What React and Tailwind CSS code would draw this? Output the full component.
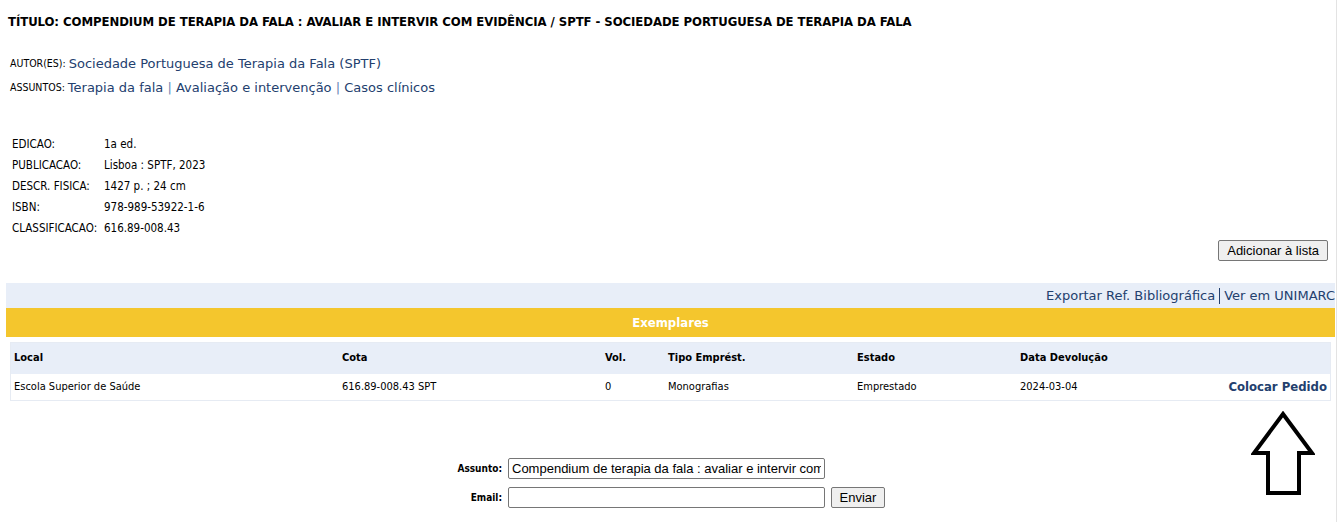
import React from 'react';

const font = "font-['DejaVu_Sans_Condensed','DejaVu_Sans',sans-serif]";
const wide = "font-['DejaVu_Sans',Verdana,sans-serif]";

const Detail = ({ label, value }) => (
    <div className="flex h-[21px] items-center text-[11.5px] text-black">
        <span className="w-[92px]">{label}</span>
        <span>{value}</span>
    </div>
);

const UpArrow = () => (
    <svg width="64" height="86" viewBox="0 0 64 86" className="block">
        <path
            d="M32 3 L61 42 L48 42 L48 82 L17 82 L17 42 L3 42 Z"
            fill="white"
            stroke="black"
            strokeWidth="4"
            strokeLinejoin="miter"
        />
    </svg>
);

export default function App() {
    const cols = 'grid grid-cols-[328px_263px_63px_189px_163px_1fr]';

    return (
        <div className={`${font} w-[1337px] h-[522px] border-r border-[#e3e3e3] bg-white pl-[6px] pr-[1px] overflow-hidden`}>
            {/* Titulo */}
            <div className="pl-[2px] pt-[12px] h-[52px] text-[13px] font-bold text-black tracking-[-0.06px]">
                TÍTULO: COMPENDIUM DE TERAPIA DA FALA : AVALIAR E INTERVIR COM EVIDÊNCIA / SPTF - SOCIEDADE PORTUGUESA DE TERAPIA DA FALA
            </div>

            <div className="pl-[4px] flex flex-col">
                <div className="h-[23px] flex items-center">
                    <span className="text-[10.5px] text-black">AUTOR(ES):</span>
                    <span className={`${wide} ml-[3px] text-[13px] text-[#23406e]`}>Sociedade Portuguesa de Terapia da Fala (SPTF)</span>
                </div>
                <div className="h-[26px] flex items-center">
                    <span className="text-[10.5px] text-black">ASSUNTOS:</span>
                    <span className={`${wide} ml-[3px] text-[13px] text-[#23406e]`}>
                        Terapia da fala <span className="text-[#6b87b5]">|</span> Avaliação e intervenção <span className="text-[#6b87b5]">|</span> Casos clínicos
                    </span>
                </div>
            </div>

            {/* Detalhes */}
            <div className="pl-[6px] mt-[33px] flex flex-col">
                <Detail label="EDICAO:" value="1a ed." />
                <Detail label="PUBLICACAO:" value="Lisboa : SPTF, 2023" />
                <Detail label="DESCR. FISICA:" value="1427 p. ; 24 cm" />
                <Detail label="ISBN:" value="978-989-53922-1-6" />
                <Detail label="CLASSIFICACAO:" value="616.89-008.43" />
            </div>

            <div className="flex justify-end pr-[7px] mt-[1px]">
                <button className="h-[21px] px-[8px] border border-[#767676] rounded-[2px] bg-[#efefef] text-[13px] font-['Liberation_Sans',Arial,sans-serif] text-black">
                    Adicionar à lista
                </button>
            </div>

            {/* Exportar */}
            <div className={`${wide} mt-[22px] h-[25px] bg-[#e8eef8] flex items-center justify-end text-[13px] text-[#23406e]`}>
                Exportar Ref. Bibliográfica
                <span className="mx-[4px] inline-block w-px h-[16px] bg-[#23406e]"></span>
                Ver em UNIMARC
            </div>
            <div className="h-[29px] bg-[#f4c62d] flex items-center justify-center text-[13px] font-bold text-white">
                Exemplares
            </div>

            {/* Tabela */}
            <div className="mx-[4px] mt-[5px] border border-[#e6ebf3]">
                <div className={`${cols} h-[31px] items-center bg-[#e8eef8] px-[3px] text-[11px] font-bold text-black`}>
                    <span>Local</span>
                    <span>Cota</span>
                    <span>Vol.</span>
                    <span>Tipo Emprést.</span>
                    <span>Estado</span>
                    <span>Data Devolução</span>
                </div>
                <div className={`${cols} h-[26px] items-center px-[3px] text-[11px] text-black`}>
                    <span>Escola Superior de Saúde</span>
                    <span>616.89-008.43 SPT</span>
                    <span>0</span>
                    <span>Monografias</span>
                    <span>Emprestado</span>
                    <span className="flex items-center justify-between">
                        <span>2024-03-04</span>
                        <span className="text-[13px] font-bold text-[#23406e]">Colocar Pedido</span>
                    </span>
                </div>
            </div>

            <div className="flex">
                {/* Formulario */}
                <div className="flex-1 flex flex-col items-center pt-[57px] pl-[84px]">
                    <div className="flex flex-col gap-[8px] font-['Liberation_Sans',Arial,sans-serif]">
                        <div className="flex items-center gap-[6px]">
                            <span className={`${font} w-[52px] text-right text-[10px] font-bold text-black`}>Assunto:</span>
                            <input
                                readOnly
                                value="Compendium de terapia da fala : avaliar e intervir com evidência"
                                className="w-[317px] h-[21px] px-[3px] border border-[#767676] rounded-[2px] text-[13px] text-black outline-none"
                            />
                            <span className="w-[54px]"></span>
                        </div>
                        <div className="flex items-center gap-[6px]">
                            <span className={`${font} w-[52px] text-right text-[10px] font-bold text-black`}>Email:</span>
                            <input className="w-[317px] h-[21px] px-[3px] border border-[#767676] rounded-[2px] text-[13px] outline-none" />
                            <button className="w-[54px] h-[21px] border border-[#767676] rounded-[2px] bg-[#efefef] text-[13px] text-black">
                                Enviar
                            </button>
                        </div>
                    </div>
                </div>
                <div className="w-[90px] pt-[10px] pl-[6px]">
                    <UpArrow />
                </div>
            </div>
        </div>
    );
}
